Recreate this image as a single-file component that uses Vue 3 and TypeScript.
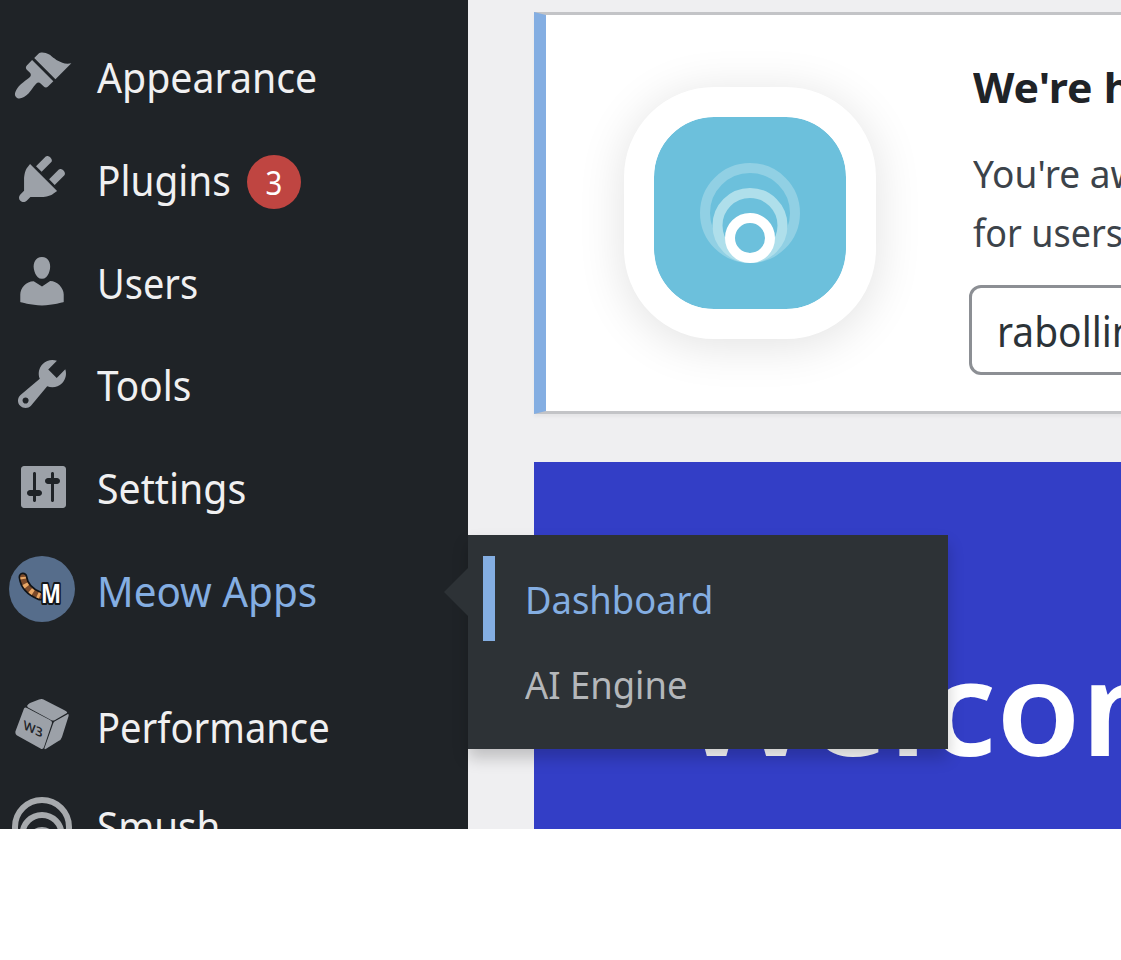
<script setup lang="ts">
interface MenuItem {
  label: string
  cls: string
  path?: string
  badge?: number
}

const items: MenuItem[] = [
  { label: 'Appearance', cls: 'appearance', path: 'M14.48 11.06L7.41 3.99l1.5-1.5c.5-.56 2.3-.47 3.51.32 1.21.8 1.43 1.28 2.91 2.1 1.18.64 2.45 1.26 4.45.85zm-.71.71L6.7 4.7 4.93 6.47c-.39.39-.39 1.02 0 1.41l1.06 1.06c.39.39.39 1.03 0 1.42-.6.6-1.43 1.11-2.21 1.69-.35.26-.7.53-1.01.84C1.43 14.23.4 16.08 1.4 17.07c.99 1 2.84-.03 4.18-1.36.31-.31.58-.66.85-1.02.57-.78 1.08-1.61 1.69-2.21.39-.39 1.02-.39 1.41 0l1.06 1.06c.39.39 1.02.39 1.41 0z' },
  { label: 'Plugins', cls: 'plugins', badge: 3, path: 'M13.11 4.36L9.87 7.6 8 5.73l3.24-3.24c.35-.34 1.05-.2 1.56.32.52.51.66 1.21.31 1.55zm-8 1.77l.91-1.12 9.01 9.01-1.19.84c-.71.71-2.63 1.16-3.82 1.16H6.14L4.9 17.26c-.59.59-1.54.59-2.12 0-.59-.58-.59-1.53 0-2.12l1.24-1.24v-3.88c0-1.13.4-3.19 1.09-3.89zm7.26 3.97l3.24-3.24c.34-.35 1.04-.21 1.55.31.52.51.66 1.21.31 1.55l-3.24 3.25z' },
  { label: 'Users', cls: 'users', path: 'M10 9.25c-2.27 0-2.73-3.44-2.73-3.44C7 4.02 7.82 2 9.97 2c2.16 0 2.98 2.02 2.71 3.81 0 0-.41 3.44-2.68 3.44zm0 2.57L12.72 10c2.39 0 4.52 2.33 4.52 4.53v2.49s-3.65 1.13-7.24 1.13c-3.65 0-7.24-1.13-7.24-1.13v-2.49c0-2.25 1.94-4.48 4.47-4.48z' },
  { label: 'Tools', cls: 'tools', path: 'M16.68 9.77c-1.34 1.34-3.3 1.67-4.95.99l-5.41 6.52c-.99.99-2.59.99-3.58 0s-.99-2.59 0-3.57l6.52-5.42c-.68-1.65-.35-3.61.99-4.95 1.28-1.28 3.12-1.62 4.72-1.06l-2.89 2.89 2.82 2.82 2.86-2.87c.53 1.58.18 3.39-1.08 4.65zM3.81 16.21c.4.39 1.04.39 1.43 0 .4-.4.4-1.04 0-1.43-.39-.4-1.03-.4-1.43 0-.39.39-.39 1.03 0 1.43z' },
  { label: 'Settings', cls: 'settings', path: 'M18 16V4c0-.55-.45-1-1-1H4c-.55 0-1 .45-1 1v12c0 .55.45 1 1 1h13c.55 0 1-.45 1-1zM8 11h1c.55 0 1 .45 1 1s-.45 1-1 1H8v1.5c0 .28-.22.5-.5.5s-.5-.22-.5-.5V13H6c-.55 0-1-.45-1-1s.45-1 1-1h1V5.5c0-.28.22-.5.5-.5s.5.22.5.5V11zm5-2h-1c-.55 0-1-.45-1-1s.45-1 1-1h1V5.5c0-.28.22-.5.5-.5s.5.22.5.5V7h1c.55 0 1 .45 1 1s-.45 1-1 1h-1v5.5c0 .28-.22.5-.5.5s-.5-.22-.5-.5V9z' },
  { label: 'Meow Apps', cls: 'meow' },
  { label: 'Performance', cls: 'performance' },
  { label: 'Smush', cls: 'smush' },
]
</script>

<template>
  <div class="page">
    <nav class="sidebar">
      <a v-for="item in items" :key="item.cls" class="row" :class="item.cls">
        <span class="icon">
          <svg v-if="item.path" viewBox="0 0 20 20" width="60" height="60"><path :d="item.path" fill="#9ca1a8" /></svg>
          <svg v-else-if="item.cls === 'meow'" class="meow-logo" viewBox="0 0 66 66" width="66" height="66">
            <circle cx="33" cy="33" r="33" fill="#566d8b" />
            <path d="M14 21C15 30 21 36 31 40" fill="none" stroke="#111417" stroke-width="9" stroke-linecap="round" />
            <path d="M14 21C15 30 21 36 31 40" fill="none" stroke="#7b4a2a" stroke-width="5.600" stroke-linecap="round" />
            <path d="M14 21C15 30 21 36 31 40" fill="none" stroke="#e8a766" stroke-width="5.600" stroke-dasharray="3.600 5" stroke-dashoffset="-7" />
            <text x="32" y="47" class="meow-letter" textLength="20" lengthAdjust="spacingAndGlyphs">M</text>
          </svg>
          <svg v-else-if="item.cls === 'performance'" viewBox="0 0 60 60" width="60" height="60">
            <g fill="#9ca1a8">
              <path d="M15 11Q16 9 18 8L27 4.500Q29 3.500 31 4.200L52 15Q56 17 55 18L43 25Q41 26 39 25L16 12.500Z" />
              <path d="M12 13.500Q13 12 15 13L38 25Q40.500 26.500 40 28L32 52Q31 55 28.500 53.500L6 41Q3 39.500 3.400 36.500Z" />
              <path d="M42.500 26.500L56 19Q57 19 56.600 21L50 42Q49 45 46.500 46L34.500 53.500Q32 55 32.500 53L41 29Q41.500 27 42.500 26.500Z" />
            </g>
            <text class="cube-text" transform="matrix(.91 .42 -.1 .97 11 34)" textLength="21" lengthAdjust="spacingAndGlyphs">W3</text>
          </svg>
          <svg v-else viewBox="0 0 60 60" width="60" height="60" fill="none" stroke="#a7aaad" stroke-width="6">
            <circle cx="30" cy="30" r="27" />
            <circle cx="30" cy="37.500" r="19.500" />
            <circle cx="30" cy="45" r="12" />
          </svg>
        </span>
        <span class="label">{{ item.label }}</span>
        <span v-if="item.badge" class="badge"><span>{{ item.badge }}</span></span>
      </a>
      <div class="submenu">
        <a class="sub current"><span>Dashboard</span></a>
        <a class="sub engine"><span>AI Engine</span></a>
      </div>
    </nav>
    <main class="content">
      <section class="notice">
        <div class="logo">
          <svg viewBox="0 0 192 192" width="192" height="192" fill="none" stroke="#fff" stroke-width="10">
            <circle cx="96" cy="96" r="45" stroke="#91d0e4" />
            <circle cx="96" cy="108.500" r="32.500" stroke="#afdfeb" />
            <circle cx="96" cy="121" r="20" />
          </svg>
        </div>
        <div class="copy">
          <h3><span>We're h</span></h3>
          <p><span class="l1">You're aw</span><br><span class="l2">for users</span></p>
          <div class="field"><span>rabollin</span></div>
        </div>
      </section>
      <section class="banner"><h1>Welcom</h1></section>
    </main>
  </div>
</template>

<style>
body {
  margin: 0;
  background: #fff;
}
</style>

<style scoped>
.page {
  display: flex;
  width: 1121px;
  height: 829px;
  overflow: hidden;
  font-family: "Noto Sans", "Open Sans", sans-serif;
  white-space: nowrap;
}
.sidebar {
  position: relative;
  z-index: 2;
  flex: 0 0 468px;
  box-sizing: border-box;
  padding-top: 25px;
  background: #1f2327;
}
.row {
  display: flex;
  align-items: center;
  height: 102.600px;
  color: #f0f0f1;
  font-size: 41px;
  line-height: 54px;
}
.icon {
  display: flex;
  flex: 0 0 60px;
  justify-content: center;
  width: 60px;
  min-width: 0;
  margin: 0 24.500px 0 12px;
}
.icon svg {
  display: block;
  flex: none;
}
.meow-logo {
  margin-top: -1px;
}
.meow-letter {
  fill: #fff;
  stroke: #111417;
  stroke-width: 4px;
  stroke-linejoin: round;
  paint-order: stroke;
  font: 700 26px "Noto Sans", sans-serif;
}
.cube-text {
  fill: #1f2327;
  font: 600 13px "Open Sans", sans-serif;
}
.label {
  display: block;
  transform-origin: 0 50%;
  transform: translateY(1px) scaleX(.957);
}
.users .label {
  transform: translateY(2px) scaleX(.925);
}
.tools .label,
.plugins .label {
  transform: translateY(1px) scaleX(.945);
}
.row.meow {
  color: #84aee2;
}
.meow .label {
  transform: translateY(2px) scaleX(.985);
}
.row.performance {
  margin-top: 33px;
}
.performance .icon {
  margin-top: 1px;
}
.performance .label {
  transform: translateY(2px) scaleX(.93);
}
.smush .label {
  transform: translateY(-1px) scaleX(.94);
}
.badge {
  width: 54px;
  height: 54px;
  margin: 7px 0 0 8.500px;
  border-radius: 50%;
  background: #bf4541;
  color: #fff;
  font-size: 32px;
  line-height: 56px;
  text-align: center;
}
.badge span {
  display: block;
  transform: scaleX(.92);
}
.submenu {
  position: absolute;
  top: 535px;
  left: 468px;
  box-sizing: border-box;
  width: 480px;
  height: 214px;
  padding-top: 21px;
  background: #2d3236;
  box-shadow: 0 9px 15px rgba(0, 0, 0, .2);
}
.submenu::before {
  position: absolute;
  top: 33px;
  left: -24px;
  border: solid transparent;
  border-width: 24px 24px 24px 0;
  border-right-color: #2d3236;
  content: "";
}
.sub {
  display: flex;
  align-items: center;
  height: 85px;
  margin-left: 15px;
  padding-left: 42px;
  color: #b4b7ba;
  font-size: 38px;
}
.sub span {
  transform-origin: 0 50%;
  transform: scaleX(.957);
}
.sub.current {
  padding-left: 30px;
  border-left: 12px solid #84aee2;
  color: #84aee2;
}
.content {
  flex: none;
  width: 900px;
  padding: 12px 0 0 66px;
  background: #efeff1;
}
.notice {
  display: flex;
  box-sizing: border-box;
  height: 402px;
  border: 3px solid #c3c4c7;
  border-left: 12px solid #84aee2;
  background: #fff;
  box-shadow: 0 3px 3px rgba(0, 0, 0, .04);
}
.logo {
  flex: none;
  width: 192px;
  height: 192px;
  margin: 72px 93px 0 78px;
  border: 30px solid #fff;
  border-radius: 90px;
  background: #6cc0dc;
  background-clip: padding-box;
  box-shadow: 0 6px 48px rgba(0, 0, 0, .12);
}
.copy {
  flex: 1;
}
.copy span {
  display: inline-block;
  transform-origin: 0 50%;
}
h3 {
  margin: 42px 0 0 4px;
  color: #1f2327;
  font-size: 42px;
  font-weight: 700;
  line-height: 60px;
}
h3 span {
  transform: scaleX(1.020);
}
p {
  margin: 27px 0 0 4px;
  color: #3c434a;
  font-size: 38px;
  line-height: 59px;
}
p .l1 {
  transform: scaleX(.975);
}
p .l2 {
  transform: scaleX(.945);
}
.field {
  box-sizing: border-box;
  height: 90px;
  margin-top: 23px;
  padding-left: 24.500px;
  border: 3px solid #8c8f94;
  border-radius: 12px;
  color: #2c3338;
  font-size: 42px;
  line-height: 86px;
}
.field span {
  transform: scaleX(.927);
}
.banner {
  height: 500px;
  margin-top: 48px;
  background: #333ec6;
}
h1 {
  margin: 0 0 0 147px;
  padding-top: 148px;
  color: #fff;
  font-size: 131px;
  font-weight: 600;
  line-height: 190px;
  transform: scaleX(1.045);
  transform-origin: 0 50%;
}
</style>
